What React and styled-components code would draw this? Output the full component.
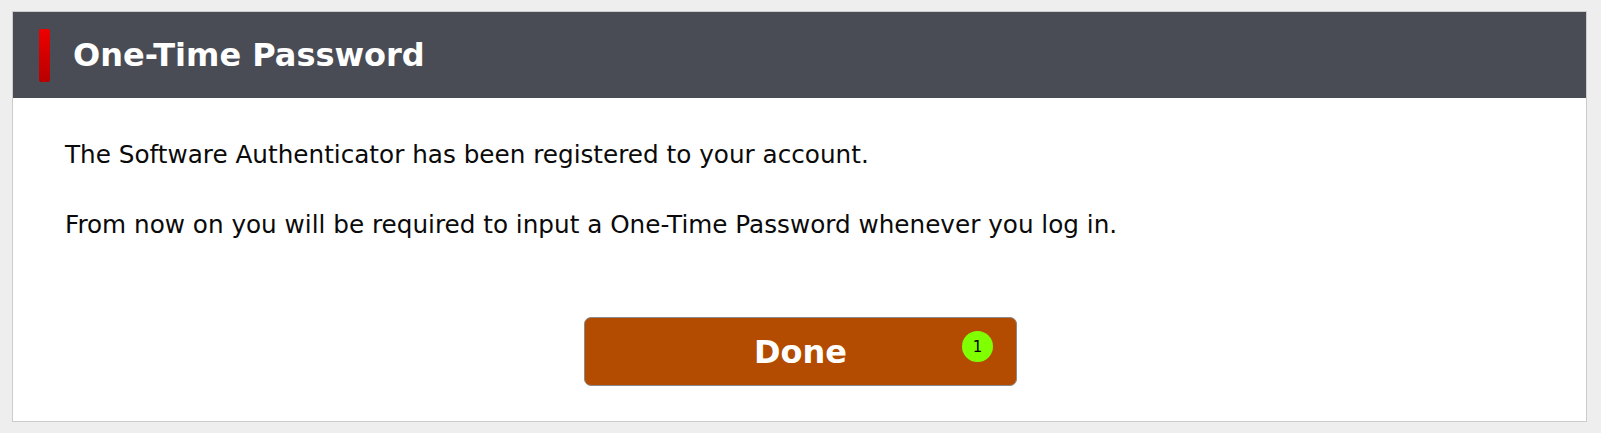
import React from 'react';
import styled, { createGlobalStyle } from 'styled-components';

const GlobalStyle = createGlobalStyle`
  html, body {
    margin: 0;
    padding: 0;
    background: #eeeeee;
    font-family: "DejaVu Sans", Verdana, sans-serif;
  }
`;

const Page = styled.div`
  padding: 11px 14px 10px 12px;
`;

const Panel = styled.section`
  background: #ffffff;
  border: 1px solid #cccccc;
`;

const Header = styled.header`
  display: flex;
  align-items: center;
  gap: 23px;
  height: 86px;
  padding: 0 26px;
  background: #494c54;
`;

const Marker = styled.span`
  width: 11px;
  height: 53px;
  border-radius: 2px;
  background: linear-gradient(180deg, #ee0000 0%, #b80000 100%);
`;

const Title = styled.h1`
  margin: 0;
  font-size: 32px;
  font-weight: 700;
  color: #ffffff;
`;

const Body = styled.div`
  padding: 39px 50px 35px 52px;
`;

const Copy = styled.div`
  display: flex;
  flex-direction: column;
  gap: 34px;
`;

const Text = styled.p`
  margin: 0;
  font-size: 24.7px;
  line-height: 36px;
  color: #0a0a0a;
`;

const Actions = styled.div`
  display: flex;
  justify-content: center;
  margin-top: 74px;
`;

const Button = styled.button`
  position: relative;
  width: 433px;
  height: 69px;
  border: 1px solid #8a8a8a;
  border-radius: 7px;
  background: #b34c00;
  color: #ffffff;
  font-family: "DejaVu Sans", Verdana, sans-serif;
  font-size: 32px;
  font-weight: 700;
  cursor: pointer;
`;

const Badge = styled.span`
  position: absolute;
  top: 13px;
  right: 23px;
  display: flex;
  align-items: center;
  justify-content: center;
  width: 31px;
  height: 31px;
  border-radius: 50%;
  background: #80ff00;
  color: #000000;
  font-size: 15px;
  font-weight: 400;
`;

export default function App() {
  return (
    <Page>
      <GlobalStyle />
      <Panel>
        <Header>
          <Marker />
          <Title>One-Time Password</Title>
        </Header>
        <Body>
          <Copy>
            <Text>The Software Authenticator has been registered to your account.</Text>
            <Text>From now on you will be required to input a One-Time Password whenever you log in.</Text>
          </Copy>
          <Actions>
            <Button>
              Done
              <Badge>1</Badge>
            </Button>
          </Actions>
        </Body>
      </Panel>
    </Page>
  );
}
